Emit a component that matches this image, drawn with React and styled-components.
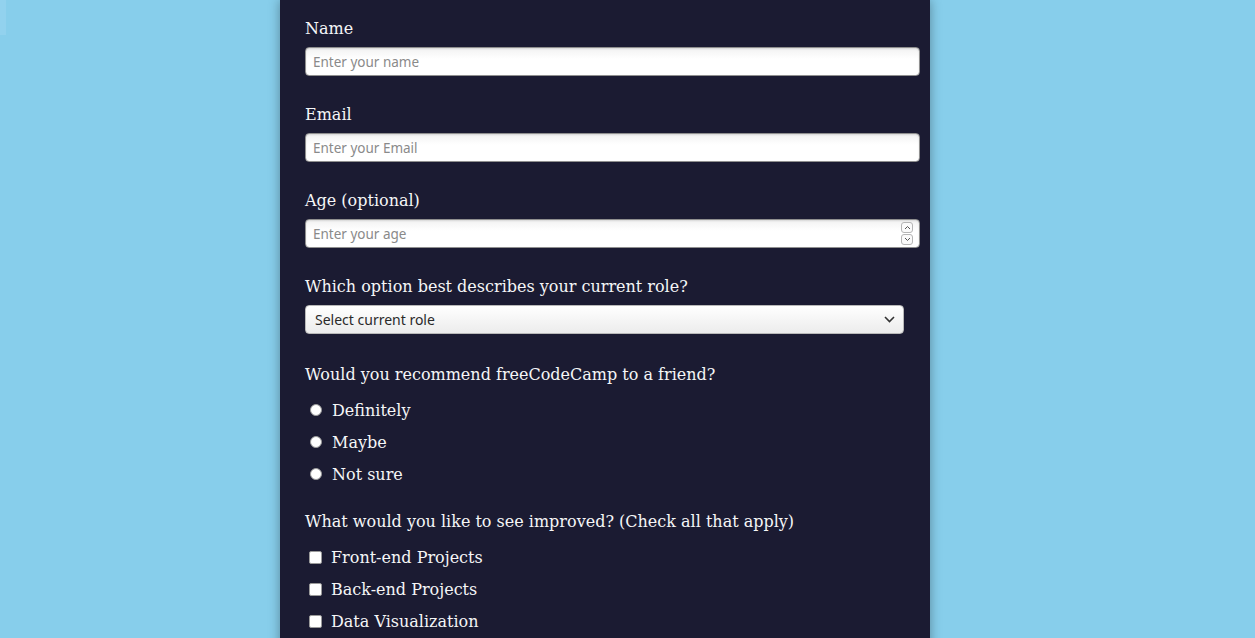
import React from 'react'
import styled, { createGlobalStyle } from 'styled-components'

const GlobalStyle = createGlobalStyle`
  html, body {
    margin: 0;
    padding: 0;
    background: #87ceeb;
    height: 100%;
    overflow: hidden;
  }
  body {
    font-family: "DejaVu Serif", serif;
  }
`

const Page = styled.div`
  display: flex;
  min-height: 638px;
`

const EdgeStrip = styled.div`
  width: 6px;
  height: 35px;
  background: #92d2ee;
`

const Panel = styled.form`
  width: 650px;
  margin-left: 274px;
  background: #1b1b32;
  color: #f5f6f7;
  border-radius: 0 0 4px 4px;
  box-shadow: 0 0 12px rgba(0, 0, 0, 0.35);
  padding: 18px 10px 0 25px;
  box-sizing: border-box;
`

const Field = styled.div`
  margin-bottom: ${p => p.gap || 28}px;
`

const Label = styled.label`
  display: block;
  font-size: 16px;
  line-height: 22px;
  margin-bottom: 7px;
`

const TextInput = styled.div`
  height: 29px;
  box-sizing: border-box;
  border: 1px solid #8f8f8f;
  border-radius: 4px;
  background: linear-gradient(#f2f2f2, #ffffff 40%);
  box-shadow: inset 0 1px 2px rgba(0, 0, 0, 0.12);
  display: flex;
  align-items: center;
  justify-content: space-between;
  padding: 0 6px 0 7px;
  font-family: "Noto Sans", "Open Sans", sans-serif;
  font-size: 13.5px;
  color: #8a8a8a;
`

const Spinner = styled.div`
  display: flex;
  flex-direction: column;
  gap: 1px;
`

const SpinBtn = styled.div`
  width: 12px;
  height: 11px;
  border: 1px solid #b5b5b5;
  border-radius: 3px;
  box-sizing: border-box;
  display: flex;
  align-items: center;
  justify-content: center;
  background: #fafafa;
`

const Select = styled.div`
  width: 599px;
  height: 29px;
  box-sizing: border-box;
  border: 1px solid #b9b9b9;
  border-radius: 4px;
  background: linear-gradient(#ffffff, #ececec);
  display: flex;
  align-items: center;
  justify-content: space-between;
  padding: 0 8px 0 9px;
  font-family: "Noto Sans", "Open Sans", sans-serif;
  font-size: 14px;
  color: #2a2a2a;
`

const Question = styled.p`
  margin: 0 0 8px;
  font-size: 16px;
  line-height: 22px;
`

const OptionRow = styled.label`
  display: flex;
  align-items: center;
  height: 32px;
  font-size: 16px;
  padding-left: ${p => (p.box ? 4 : 5)}px;
`

const Radio = styled.span`
  width: 12px;
  height: 12px;
  border-radius: 50%;
  background: #fff;
  border: 1px solid #9a9a9a;
  box-sizing: border-box;
  margin-right: 10px;
`

const Box = styled.span`
  width: 13px;
  height: 13px;
  border-radius: 2px;
  background: #fff;
  border: 1px solid #9a9a9a;
  box-sizing: border-box;
  margin-right: 9px;
`

const Chevron = () => (
  <svg width="11" height="7" viewBox="0 0 11 7">
    <path d="M1 1l4.5 4.5L10 1" fill="none" stroke="#333" strokeWidth="1.6" />
  </svg>
)

const Caret = ({ up }) => (
  <svg width="7" height="5" viewBox="0 0 7 5">
    <path d={up ? 'M1 4l2.5-2.5L6 4' : 'M1 1l2.5 2.5L6 1'} fill="none" stroke="#555" strokeWidth="1" />
  </svg>
)

export default function App() {
  return (
    <>
      <GlobalStyle />
      <Page>
        <EdgeStrip />
        <Panel>
          <Field>
            <Label>Name</Label>
            <TextInput>Enter your name</TextInput>
          </Field>
          <Field>
            <Label>Email</Label>
            <TextInput>Enter your Email</TextInput>
          </Field>
          <Field>
            <Label>Age (optional)</Label>
            <TextInput>
              Enter your age
              <Spinner>
                <SpinBtn><Caret up /></SpinBtn>
                <SpinBtn><Caret /></SpinBtn>
              </Spinner>
            </TextInput>
          </Field>
          <Field gap={30}>
            <Label>Which option best describes your current role?</Label>
            <Select>
              Select current role
              <Chevron />
            </Select>
          </Field>
          <Field gap={21}>
            <Question>Would you recommend freeCodeCamp to a friend?</Question>
            {['Definitely', 'Maybe', 'Not sure'].map(o => (
              <OptionRow key={o}>
                <Radio />
                {o}
              </OptionRow>
            ))}
          </Field>
          <Field>
            <Question>What would you like to see improved? (Check all that apply)</Question>
            {['Front-end Projects', 'Back-end Projects', 'Data Visualization'].map(o => (
              <OptionRow box key={o}>
                <Box />
                {o}
              </OptionRow>
            ))}
          </Field>
        </Panel>
      </Page>
    </>
  )
}
